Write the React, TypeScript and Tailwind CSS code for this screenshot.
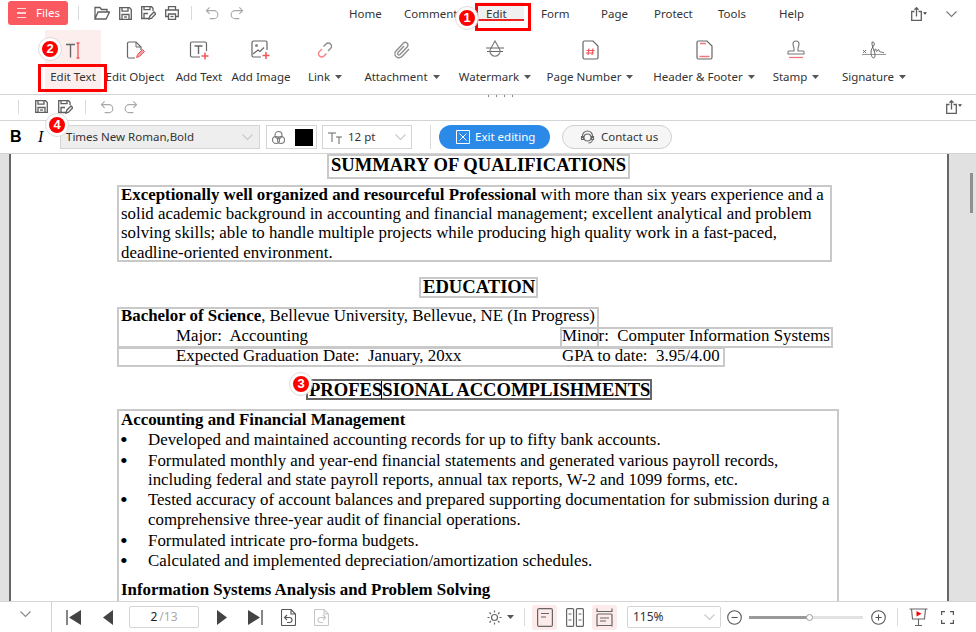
import React from "react";

const R = "#f2555a";
const G = "#5f5f5f";

function Ic({ w = 20, h = 20, vb = "0 0 20 20", children }: { w?: number; h?: number; vb?: string; children: React.ReactNode }) {
  return (
    <svg width={w} height={h} viewBox={vb} fill="none" stroke={G} strokeWidth={1.3} className="shrink-0">
      {children}
    </svg>
  );
}

const Folder = () => (
  <Ic w={16} h={14} vb="0 0 16 14"><path d="M1 13V1.500h5L7.500 3.500H13v2.500M1 13l3-7h11.500L12 13z" /></Ic>
);
const Save = () => (
  <Ic w={13} h={13} vb="0 0 13 13"><path d="M.7.700h9.800l1.800 1.800v9.800H.7z" /><path d="M3 .7v3.500h6V.7M3 12.300V7.500h7v4.800" /><path d="M5 10h3" /></Ic>
);
const SaveAs = () => (
  <Ic w={15} h={14} vb="0 0 15 14"><path d="M8.500 12.500H.7V.7h9.800L12 2.200v2.800" /><path d="M3 .7v3h6v-3M3 12V7.500h4" /><path d="m8 13 .8-2.800L13 6l1.800 1.800-4.200 4.300z" /></Ic>
);
const Printer = () => (
  <Ic w={14} h={14} vb="0 0 14 14"><path d="M3.500 4V.7h7V4M3.500 10.500H.7V4h12.600v6.500h-2.800" /><path d="M3.500 8h7v5.300h-7z" /><path d="M5.500 10.500h3" /></Ic>
);
const Undo = ({ c = "#a9a9a9" }: { c?: string }) => (
  <svg width={14} height={14} viewBox="0 0 15 15" fill="none" stroke={c} strokeWidth={1.2} className="shrink-0"><path d="M5 1.500 1.500 5 5 8.500M1.500 5h8a4 4 0 0 1 0 8.500H5" /></svg>
);
const Redo = ({ c = "#a9a9a9" }: { c?: string }) => (
  <svg width={14} height={14} viewBox="0 0 15 15" fill="none" stroke={c} strokeWidth={1.2} className="shrink-0"><path d="M10 1.500 13.500 5 10 8.500M13.500 5h-8a4 4 0 0 0 0 8.500H10" /></svg>
);
const Share = () => (
  <div className="flex items-center gap-[1px]">
    <Ic w={11} h={14} vb="0 0 11 14"><path d="M3.500 4.500H.7v8.800h9.600V4.500H7.500M5.500 9.500V.7M3.500 2.700l2-2 2 2" /></Ic>
    <svg width={4} height={3} viewBox="0 0 5 3" className="shrink-0 mb-[2px]"><path d="M0 0h5L2.500 3z" fill="#444" /></svg>
  </div>
);
const Caret = () => <svg width={7} height={4} viewBox="0 0 7 4" className="shrink-0"><path d="M0 0h7L3.500 4z" fill="#555" /></svg>;
const Chev = ({ c = "#c8c8c8" }: { c?: string }) => (
  <svg width={11} height={7} viewBox="0 0 11 7" fill="none" stroke={c} strokeWidth={1.1} className="shrink-0"><path d="m.5.500 5 5 5-5" /></svg>
);

const tools: { label: string; w: number; caret?: boolean; icon: React.ReactNode }[] = [
  {
    label: "Edit Text", w: 62,
    icon: <svg width={16} height={17} viewBox="0 0 16 17" fill="none" className="shrink-0"><path d="M1 2.500h9M5.500 2.500v13" stroke="#666" strokeWidth={1.4} /><path d="M13 1v15M11.500 1h3M11.500 16h3" stroke={R} strokeWidth={1.3} /></svg>,
  },
  {
    label: "Edit Object", w: 62,
    icon: <svg width={19} height={20} viewBox="0 0 19 20" fill="none" className="shrink-0"><path d="M9 18H3a1.500 1.500 0 0 1-1.500-1.500v-13A1.500 1.500 0 0 1 3 2h7l5 5v3" stroke="#666" strokeWidth={1.2} /><path d="M10 2v5h5" stroke="#666" strokeWidth={1} /><path d="m10.500 17.500 1-3 5-5 2 2-5 5z" fill="#f6a0a2" stroke={R} strokeWidth={1} /></svg>,
  },
  {
    label: "Add Text", w: 66,
    icon: <svg width={21} height={20} viewBox="0 0 21 20" fill="none" className="shrink-0"><path d="M11 17H3a1.500 1.500 0 0 1-1.500-1.500v-12A1.500 1.500 0 0 1 3 2h13a1.500 1.500 0 0 1 1.500 1.500V11" stroke="#666" strokeWidth={1.2} /><path d="M5.500 6h8M9.500 6v8" stroke="#666" strokeWidth={1.4} /><path d="M16 12.500v7M12.500 16h7" stroke={R} strokeWidth={1.5} /></svg>,
  },
  {
    label: "Add Image", w: 58,
    icon: <svg width={20} height={20} viewBox="0 0 20 20" fill="none" className="shrink-0"><path d="M10 17H2.500A1.500 1.500 0 0 1 1 15.500v-13A1.500 1.500 0 0 1 2.500 1h12A1.500 1.500 0 0 1 16 2.500V10" stroke="#666" strokeWidth={1.2} /><circle cx="5.500" cy="5.500" r="1.500" fill="#888" /><path d="m2 14 5-4 2 1.500 4-4" stroke="#666" strokeWidth={1.2} /><path d="M15 12v7M11.500 15.500h7" stroke={R} strokeWidth={1.5} /></svg>,
  },
  {
    label: "Link", w: 70, caret: true,
    icon: <svg width={18} height={18} viewBox="0 0 18 18" fill="none" className="shrink-0"><path d="M7.500 5.500 10 3a3 3 0 0 1 4.500 0 3 3 0 0 1 0 4.500L12 10" stroke="#8a8a8a" strokeWidth={1.4} /><path d="M10.500 12.500 8 15a3 3 0 0 1-4.500 0 3 3 0 0 1 0-4.500L6 8" stroke={R} strokeWidth={1.4} opacity={0.75} /></svg>,
  },
  {
    label: "Attachment", w: 84, caret: true,
    icon: <svg width={20} height={20} viewBox="0 0 20 20" fill="none" className="shrink-0"><path d="m17 9-7 7.500a4 4 0 0 1-6-5.500l7.500-8a2.700 2.700 0 0 1 4 3.500l-7.500 8a1.300 1.300 0 0 1-2-2L12 6" stroke="#8f8f8f" strokeWidth={1.4} /></svg>,
  },
  {
    label: "Watermark", w: 102, caret: true,
    icon: <svg width={20} height={20} viewBox="0 0 20 20" fill="none" className="shrink-0"><path d="M1 8h18M2 11.500h16" stroke="#666" strokeWidth={1.1} /><path d="M10 1 5.500 9a5 5 0 1 0 9 0z" stroke="#777" strokeWidth={1.1} /></svg>,
  },
  {
    label: "Page Number", w: 88, caret: true,
    icon: <svg width={17} height={20} viewBox="0 0 17 20" fill="none" className="shrink-0"><path d="M2.500 1H11l5 5v11.500a1.500 1.500 0 0 1-1.500 1.500h-12A1.500 1.500 0 0 1 1 17.500v-15A1.500 1.500 0 0 1 2.500 1z" stroke="#666" strokeWidth={1.2} /><path d="M7 8.500 6 15M11 8.500 10 15M4.500 10.500h8M4 13h8" stroke={R} strokeWidth={1.2} /></svg>,
  },
  {
    label: "Header & Footer", w: 140, caret: true,
    icon: <svg width={17} height={20} viewBox="0 0 17 20" fill="none" className="shrink-0"><path d="M2.500 1H11l5 5v11.500a1.500 1.500 0 0 1-1.500 1.500h-12A1.500 1.500 0 0 1 1 17.500v-15A1.500 1.500 0 0 1 2.500 1z" stroke="#666" strokeWidth={1.2} /><path d="M4 3.500h6M3.500 16.500h10" stroke={R} strokeWidth={1.3} opacity={0.8} /></svg>,
  },
  {
    label: "Stamp", w: 44, caret: true,
    icon: <svg width={18} height={20} viewBox="0 0 18 20" fill="none" className="shrink-0"><path d="M7 9c0-2-1-3-1-5a3 3 0 0 1 6 0c0 2-1 3-1 5v2h5a1 1 0 0 1 1 1v2H1v-2a1 1 0 0 1 1-1h5z" stroke="#777" strokeWidth={1.1} /><path d="M2 17.500h14" stroke={R} strokeWidth={1.3} opacity={0.8} /></svg>,
  },
  {
    label: "Signature", w: 112, caret: true,
    icon: <svg width={24} height={20} viewBox="0 0 24 20" fill="none" className="shrink-0"><path d="M0 14.500h24" stroke="#999" strokeWidth={1} /><path d="m1 10 3 3M4 10l-3 3" stroke="#666" strokeWidth={0.9} /><path d="M10 2c2 0 3 1 2 3s-3 4-3 7 1 6 2.500 6 2-3 1-6-3-7-2.500-10zM12 11c1-2 2-3 2-1s1 2 2 0 1 2 2 2 2 0 4 1" stroke="#666" strokeWidth={1} /></svg>,
  },
];

const tabs: { t: string; w: number }[] = [
  { t: "Home", w: 55 }, { t: "Comment", w: 82 }, { t: "Edit", w: 55 }, { t: "Form", w: 60 },
  { t: "Page", w: 53 }, { t: "Protect", w: 64 }, { t: "Tools", w: 61 }, { t: "Help", w: 40 },
];

function Box({ x, y, w, h, dark }: { x: number; y: number; w: number; h: number; dark?: boolean }) {
  return (
    <div
      className={"absolute " + (dark ? "border-[2px] border-[#666666]" : "border-[2px] border-[#c9c9c9]")}
      style={{ left: x, top: y, width: w, height: h }}
    />
  );
}

function L({ x, y, children, bold, size = 16.87 }: { x: number; y: number; children: React.ReactNode; bold?: boolean; size?: number }) {
  return (
    <div
      className={"absolute whitespace-pre leading-[20px] text-black " + (bold ? "font-bold" : "font-normal")}
      style={{ left: x, top: y, fontSize: size }}
    >
      {children}
    </div>
  );
}

const Dot = ({ y }: { y: number }) => <L x={120} y={y} size={22}>•</L>;

function Badge({ n, x, y }: { n: number; x: number; y: number }) {
  return (
    <div
      className="absolute w-[22px] h-[22px] rounded-full bg-[#f00] border-[3px] border-white outline outline-1 outline-[#dddddd] text-white font-bold text-[13px] flex items-center justify-center font-['Liberation_Sans',sans-serif]"
      style={{ left: x, top: y }}
    >
      {n}
    </div>
  );
}

const Vr = ({ h = 18 }: { h?: number }) => <div className="w-px bg-[#d9d9d9] shrink-0" style={{ height: h }} />;

export default function App() {
  return (
    <div className="relative w-[976px] h-[632px] overflow-hidden bg-white flex flex-col text-[11.5px] text-[#333] font-['Noto_Sans',sans-serif]">
      {/* Menu row */}
      <div className="h-[28px] flex items-center shrink-0">
        <div className="ml-[8px] w-[60px] h-[24px] mb-[2px] rounded-[3px] bg-[#f9595f] flex items-center text-white">
          <div className="ml-[9px] flex flex-col gap-[3px]">
            <div className="w-[9px] h-[1.5px] bg-[#ffd5d6]" /><div className="w-[9px] h-[1.5px] bg-[#ffd5d6]" /><div className="w-[9px] h-[1.5px] bg-[#ffd5d6]" />
          </div>
          <span className="ml-[10px] text-[11.5px]">Files</span>
        </div>
        <div className="ml-[10px] mb-[2px]"><Vr h={14} /></div>
        <div className="ml-[15px] mb-[2px] flex items-center gap-[9px]">
          <Folder /><Save /><SaveAs /><Printer />
        </div>
        <div className="ml-[12px] mb-[2px]"><Vr h={14} /></div>
        <div className="ml-[13px] mb-[2px] flex items-center gap-[11px]"><Undo /><Redo /></div>
        <div className="ml-[105px] flex items-center">
          {tabs.map((t) => (
            <div key={t.t} className="relative shrink-0" style={{ width: t.w }}>
              {t.t === "Edit" && (
                <>
                  <div className="absolute left-[-8px] top-[-3px] w-[46px] h-[18px] bg-[#f0f0f0]" />
                  <div className="absolute left-[-8px] top-[14px] w-[46px] h-[1.5px] bg-[#ee2222]" />
                </>
              )}
              <span className="relative">{t.t}</span>
            </div>
          ))}
        </div>
        <div className="ml-[92px]"><Share /></div>
        <div className="ml-[19px]"><Chev c="#777" /></div>
      </div>

      {/* Tool row */}
      <div className="relative h-[67px] shrink-0 border-b border-[#d4d4d4] flex pl-[42px]">
        <div className="absolute left-[45px] top-[2px] w-[56px] h-[64px] bg-[#fdeeee]" />
        {tools.map((t) => (
          <div key={t.label} className="relative shrink-0 flex flex-col items-center" style={{ width: t.w }}>
            <div className="h-[24px] mt-[10px] flex items-center justify-center">{t.icon}</div>
            <div className="mt-[6px] flex items-center gap-[5px] whitespace-nowrap">
              <span>{t.label}</span>
              {t.caret && <Caret />}
            </div>
          </div>
        ))}
      </div>

      {/* Quick row */}
      <div className="relative h-[26px] shrink-0 border-b border-[#d4d4d4] flex items-center pb-[2px]">
        <div className="absolute left-[488px] top-0 flex gap-[7px]">
          <div className="w-px h-[2px] bg-[#888]" /><div className="w-px h-[2px] bg-[#888]" /><div className="w-px h-[2px] bg-[#888]" /><div className="w-px h-[2px] bg-[#888]" />
        </div>
        <div className="ml-[18px]"><Vr h={14} /></div>
        <div className="ml-[16px] flex items-center gap-[10px]"><Save /><SaveAs /></div>
        <div className="ml-[12px]"><Vr h={14} /></div>
        <div className="ml-[14px] flex items-center gap-[10px]"><Undo /><Redo /></div>
        <div className="ml-auto mr-[14px]"><Share /></div>
      </div>

      {/* Format row */}
      <div className="h-[33px] shrink-0 border-b border-[#d4d4d4] flex items-center">
        <span className="ml-[10px] w-[12px] font-bold text-[16px] text-black font-['Liberation_Sans',sans-serif]">B</span>
        <span className="ml-[16px] w-[10px] italic text-[16px] text-black font-['Liberation_Serif',serif]">I</span>
        <div className="ml-[12px] w-[200px] h-[24px] bg-[#eeeeee] border border-[#d5d5d5] flex items-center justify-between pl-[5px] pr-[6px]">
          <span>Times New Roman,Bold</span>
          <Chev />
        </div>
        <div className="ml-[6px] w-[51px] h-[24px] border border-[#d5d5d5] flex items-center gap-[9px] pl-[4px]">
          <svg width={15} height={15} viewBox="0 0 15 15" fill="none" stroke="#777" strokeWidth={1.1} className="shrink-0"><circle cx="7.500" cy="5" r="3.500" /><circle cx="5" cy="10" r="3.500" /><circle cx="10" cy="10" r="3.500" /></svg>
          <div className="w-[18px] h-[17px] bg-black" />
        </div>
        <div className="ml-[5px] w-[90px] h-[24px] border border-[#d5d5d5] flex items-center pl-[5px] pr-[5px]">
          <svg width={15} height={13} viewBox="0 0 15 13" fill="none" stroke="#666" strokeWidth={1} className="shrink-0"><path d="M0 2h8M4 2v9M8 6h6M11 6v7" /></svg>
          <span className="ml-[5px] flex-1">12 pt</span>
          <Chev />
        </div>
        <div className="ml-[18px]"><Vr h={24} /></div>
        <div className="ml-[8px] w-[111px] h-[24px] rounded-full bg-[#2b8ae8] text-white flex items-center pl-[17px]">
          <svg width={14} height={14} viewBox="0 0 14 14" fill="none" stroke="#fff" strokeWidth={1} className="shrink-0"><path d="M.5.500h13v13H.5zM3.500 3.500l7 7M10.500 3.500l-7 7" /></svg>
          <span className="ml-[5px]">Exit editing</span>
        </div>
        <div className="ml-[12px] w-[110px] h-[24px] rounded-full bg-[#f6f6f6] border border-[#cfcfcf] flex items-center pl-[17px]">
          <svg width={15} height={15} viewBox="0 0 15 15" fill="none" stroke="#666" strokeWidth={1.1} className="shrink-0"><path d="M2.500 8V6a5 5 0 0 1 10 0v2" /><circle cx="7.500" cy="7.500" r="3.500" /><path d="M1.500 6.500h2v3h-2zM11.500 6.500h2v3h-2zM12.500 9.500c0 2-2 3.500-4 3.500" /></svg>
          <span className="ml-[6px]">Contact us</span>
        </div>
      </div>

      {/* Document */}
      <div className="flex-1 min-h-0 flex bg-[#e1e1e1]">
        <div className="w-[9px] shrink-0" />
        <div className="relative w-[940px] shrink-0 bg-white border-x-[2px] border-[#666666] overflow-hidden font-['Liberation_Serif',serif]">
          <div className="absolute left-[-11px] top-[-154px] w-[976px] h-[786px]">
            <Box x={327} y={154} w={303} h={25} />
            <L x={331} y={155} bold size={18.6}>SUMMARY OF QUALIFICATIONS</L>
            <Box x={117} y={185} w={715} h={77} />
            <L x={121} y={185}><b>Exceptionally well organized and resourceful Professional</b> with more than six years experience and a</L>
            <L x={121} y={204}>solid academic background in accounting and financial management; excellent analytical and problem</L>
            <L x={121} y={223}>solving skills; able to handle multiple projects while producing high quality work in a fast-paced,</L>
            <L x={121} y={243}>deadline-oriented environment.</L>

            <Box x={419} y={277} w={119} h={21} />
            <L x={423} y={277} bold size={18.6}>EDUCATION</L>
            <Box x={117} y={307} w={482} h={41} />
            <Box x={117} y={347} w={608} h={20} />
            <Box x={560} y={327} w={273} h={21} />
            <L x={121} y={306}><b>Bachelor of Science</b>, Bellevue University, Bellevue, NE (In Progress)</L>
            <L x={176} y={326}>Major:  Accounting</L>
            <L x={176} y={346}>Expected Graduation Date:  January, 20xx</L>
            <L x={562} y={326}>Minor:  Computer Information Systems</L>
            <L x={562} y={346}>GPA to date:  3.95/4.00</L>

            <Box x={306} y={379} w={346} h={21} dark />
            <L x={309} y={380} bold size={18.6}>PROFESSIONAL ACCOMPLISHMENTS</L>
            <div className="absolute left-[381px] top-[381px] w-px h-[18px] bg-black" />

            <Box x={117} y={409} w={722} h={240} />
            <L x={121} y={410} bold>Accounting and Financial Management</L>
            <Dot y={430} /><L x={148} y={430}>Developed and maintained accounting records for up to fifty bank accounts.</L>
            <Dot y={451} /><L x={148} y={451}>Formulated monthly and year-end financial statements and generated various payroll records,</L>
            <L x={148} y={470}>including federal and state payroll reports, annual tax reports, W-2 and 1099 forms, etc.</L>
            <Dot y={490} /><L x={148} y={490}>Tested accuracy of account balances and prepared supporting documentation for submission during a</L>
            <L x={148} y={510}>comprehensive three-year audit of financial operations.</L>
            <Dot y={531} /><L x={148} y={531}>Formulated intricate pro-forma budgets.</L>
            <Dot y={551} /><L x={148} y={551}>Calculated and implemented depreciation/amortization schedules.</L>
            <L x={121} y={580} bold>Information Systems Analysis and Problem Solving</L>
          </div>
        </div>
        <div className="flex-1 relative">
          <div className="absolute left-[21px] top-[19px] w-[3px] h-[40px] bg-[#909090]" />
        </div>
      </div>

      {/* Bottom bar */}
      <div className="h-[31px] shrink-0 flex items-center">
        <div className="w-[51px] h-full shrink-0 border-t border-[#d4d4d4] flex justify-center pt-[9px]"><Chev c="#888" /></div>
        <div className="flex-1 h-full bg-white border-l border-t border-[#d4d4d4] flex items-center">
          <div className="ml-[14px] flex items-center gap-[22px]">
            <svg width={15} height={15} viewBox="0 0 15 15" className="shrink-0"><path d="M1 0v15" stroke="#444" strokeWidth={1.3} /><path d="M15 0v15L3 7.500z" fill="#444" /></svg>
            <svg width={10} height={15} viewBox="0 0 10 15" className="shrink-0"><path d="M10 0v15L0 7.500z" fill="#444" /></svg>
          </div>
          <div className="ml-[16px] w-[70px] h-[22px] border border-[#d5d5d5] rounded-[2px] flex items-center justify-center text-[12px]">
            <span className="text-[#222]">2</span><span className="text-[#aaa]">&thinsp;/13</span>
          </div>
          <div className="ml-[18px] flex items-center gap-[21px]">
            <svg width={10} height={15} viewBox="0 0 10 15" className="shrink-0"><path d="M0 0v15L10 7.500z" fill="#444" /></svg>
            <svg width={15} height={15} viewBox="0 0 15 15" className="shrink-0"><path d="M14 0v15" stroke="#444" strokeWidth={1.3} /><path d="M0 0v15l12-7.500z" fill="#444" /></svg>
          </div>
          <div className="ml-[18px]">
            <svg width={15} height={17} viewBox="0 0 15 17" fill="none" stroke="#555" strokeWidth={1.1} className="shrink-0"><path d="M10 .5H1.500a1 1 0 0 0-1 1v14a1 1 0 0 0 1 1h12a1 1 0 0 0 1-1V5zM10 .5V5h4.500" /><path d="M6 6 3.500 8.500 6 11M3.500 8.500h5a2.500 2.500 0 0 1 0 5H6" /></svg>
          </div>
          <div className="ml-[18px]">
            <svg width={15} height={17} viewBox="0 0 15 17" fill="none" stroke="#c6c6c6" strokeWidth={1.1} className="shrink-0"><path d="M10 .5H1.500a1 1 0 0 0-1 1v14a1 1 0 0 0 1 1h12a1 1 0 0 0 1-1V5zM10 .5V5h4.500" /><path d="M9 6l2.500 2.500L9 11M11.500 8.500h-5a2.500 2.500 0 0 0 0 5H9" /></svg>
          </div>
          <div className="ml-[158px] flex items-center gap-[5px]">
            <svg width={15} height={15} viewBox="0 0 15 15" fill="none" stroke="#666" strokeWidth={1.2} className="shrink-0"><circle cx="7.500" cy="7.500" r="3" /><path d="M7.500.5v2M7.500 12.500v2M.5 7.500h2M12.500 7.500h2M2.500 2.500 4 4M11 11l1.500 1.500M2.500 12.500 4 11M11 4l1.500-1.500" /></svg>
            <Caret />
          </div>
          <div className="ml-[10px]"><Vr h={18} /></div>
          <div className="ml-[7px] w-[25px] h-[25px] rounded-[3px] bg-[#fdeaea] flex items-center justify-center">
            <svg width={16} height={19} viewBox="0 0 16 19" fill="none" stroke="#666" strokeWidth={1.2} className="shrink-0"><rect x=".6" y=".6" width="14.800" height="17.800" rx="1.500" /><path d="M4 5.500h8M4 9h5" /></svg>
          </div>
          <div className="ml-[8px] w-[20px] flex justify-center">
            <svg width={18} height={19} viewBox="0 0 18 19" fill="none" stroke="#666" strokeWidth={1.2} className="shrink-0"><rect x=".6" y=".6" width="7" height="17.800" rx="1" /><rect x="10.400" y=".6" width="7" height="17.800" rx="1" /><path d="M2.500 6h3M2.500 12h3M12.500 6h3M12.500 12h3" /></svg>
          </div>
          <div className="ml-[7px] w-[25px] h-[25px] rounded-[3px] bg-[#fdeaea] flex items-center justify-center">
            <svg width={17} height={19} viewBox="0 0 17 19" fill="none" stroke="#666" strokeWidth={1.2} className="shrink-0"><path d="M1 .5v3h15v-3M1 18.500v-1M16 18.500v-1" /><rect x="1" y="6" width="15" height="11.500" rx="1" /><path d="M4 10h9M4 13h6" /></svg>
          </div>
          <div className="ml-[10px] w-[94px] h-[22px] border border-[#d5d5d5] rounded-[2px] flex items-center justify-between pl-[5px] pr-[5px] text-[12px]">
            <span>115%</span><Chev />
          </div>
          <div className="ml-[6px]">
            <svg width={15} height={15} viewBox="0 0 15 15" fill="none" stroke="#555" strokeWidth={1.1} className="shrink-0"><circle cx="7.500" cy="7.500" r="6.800" /><path d="M4.500 7.500h6" /></svg>
          </div>
          <div className="ml-[7px] w-[114px] h-[3px] bg-[#e2e2e2] relative">
            <div className="absolute left-0 top-0 h-[3px] w-[61px] bg-[#9a9a9a]" />
            <div className="absolute left-[57px] top-[-2px] w-[7px] h-[7px] rounded-full bg-white border-[1.5px] border-[#9a9a9a]" />
          </div>
          <div className="ml-[8px]">
            <svg width={15} height={15} viewBox="0 0 15 15" fill="none" stroke="#555" strokeWidth={1.1} className="shrink-0"><circle cx="7.500" cy="7.500" r="6.800" /><path d="M4.500 7.500h6M7.500 4.500v6" /></svg>
          </div>
          <div className="ml-[11px]"><Vr h={18} /></div>
          <div className="ml-[11px]">
            <svg width={19} height={18} viewBox="0 0 19 18" fill="none" stroke="#666" strokeWidth={1.1} className="shrink-0"><path d="M.5 1h18M2.500 1 3.500 11h12l1-10M9.500 11v6M6 17.500h7" /><path d="M7.500 3v5.500l5-2.700z" fill="#f00" stroke="none" /></svg>
          </div>
          <div className="ml-[13px]">
            <svg width={13} height={13} viewBox="0 0 13 13" fill="none" stroke="#555" strokeWidth={1.2} className="shrink-0"><path d="M.6 4V.6H4M9 .6h3.400V4M12.400 9v3.400H9M4 12.400H.6V9" /></svg>
          </div>
        </div>
      </div>

      {/* Annotations */}
      <div className="absolute left-[38px] top-[64px] w-[69px] h-[28px] border-[3px] border-[#f00]" />
      <div className="absolute left-[475px] top-[3px] w-[56px] h-[28px] border-[3px] border-[#f00]" />
      <Badge n={1} x={456} y={7} />
      <Badge n={2} x={39} y={38} />
      <Badge n={3} x={290} y={373} />
      <Badge n={4} x={46} y={114} />
    </div>
  );
}
